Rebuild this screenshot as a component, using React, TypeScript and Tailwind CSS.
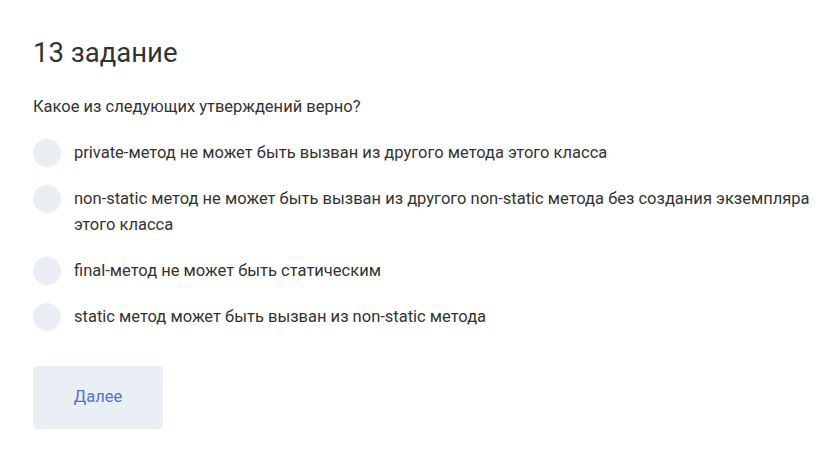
import { useState } from "react";

const options = [
  "private-метод не может быть вызван из другого метода этого класса",
  "non-static метод не может быть вызван из другого non-static метода без создания экземпляра этого класса",
  "final-метод не может быть статическим",
  "static метод может быть вызван из non-static метода",
];

export default function App() {
  const [picked, setPicked] = useState<number | null>(null);

  return (
    <div className="min-h-screen bg-white text-[#333333]" style={{ fontFamily: "Roboto, 'Liberation Sans', sans-serif" }}>
      <div className="pl-[33px] pr-[14px] pt-[36px]">
        <h2 className="text-[27.5px] leading-[34px] font-normal">13 задание</h2>

        <p className="mt-[24px] text-[16.5px] leading-[26px]">Какое из следующих утверждений верно?</p>

        <div className="mt-[20px] flex flex-col gap-[20px]">
          {options.map((o, i) => (
            <label key={i} className="flex items-start gap-[13px] cursor-pointer" onClick={() => setPicked(i)}>
              <span className="-my-px w-[28px] h-[28px] shrink-0 rounded-full bg-[#ebeff5] flex items-center justify-center">
                {picked === i && <span className="w-[10px] h-[10px] rounded-full bg-[#4a73d4]" />}
              </span>
              <span className="text-[16.5px] leading-[26px]">{o}</span>
            </label>
          ))}
        </div>

        <button className="mt-[36px] w-[130px] h-[63px] rounded-[4px] bg-[#eaeff6] text-[16.5px] text-[#4f73cc]">
          Далее
        </button>
      </div>
    </div>
  );
}
